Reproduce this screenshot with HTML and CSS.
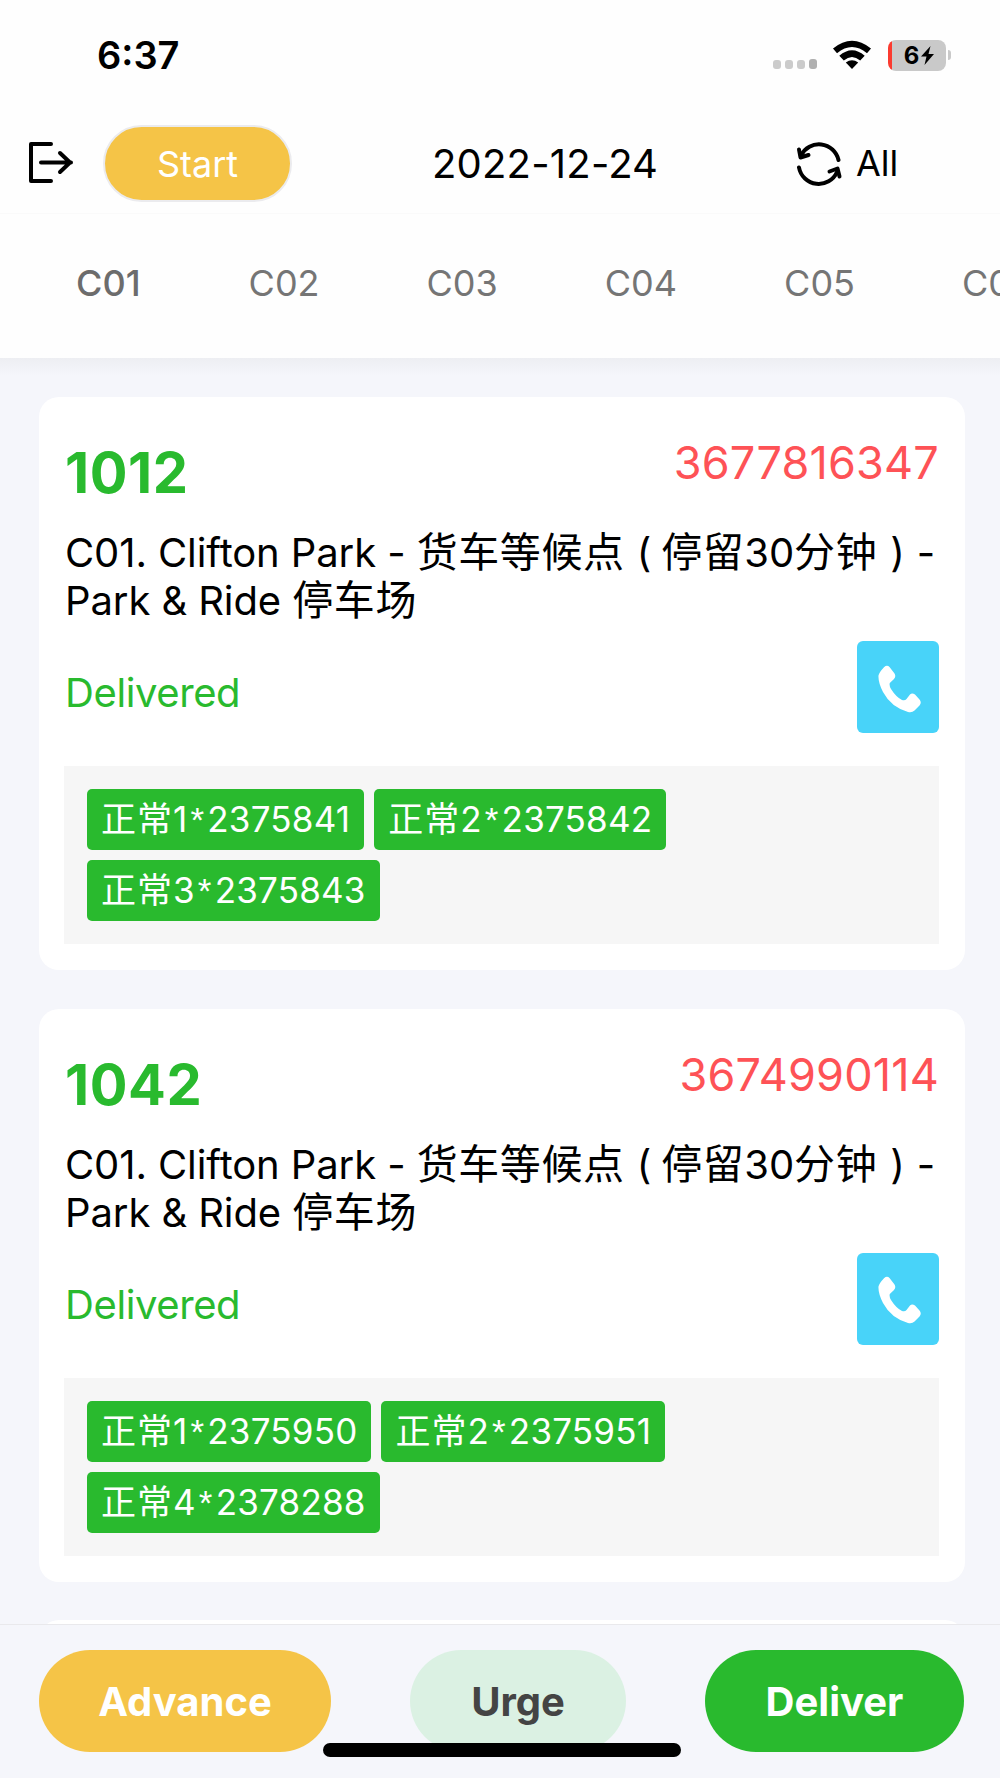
FILE: index.html
```
<!DOCTYPE html>
<html lang="zh-CN">
<head>
<meta charset="utf-8">
<title>Delivery</title>
<meta name="viewport" content="width=device-width, initial-scale=1">
<link rel="stylesheet" href="styles.css">
</head>
<body>
<div class="status">
	<div class="time">6:37</div>
	<div class="signal"><i></i><i></i><i></i><i></i></div>
	<svg class="wifi" width="40" height="30" viewBox="0 0 40 30">
		<path d="M1 8.6 Q20 -7 39 8.6 L35 13.2 Q20 0.6 5 13.2 Z"/>
		<path d="M7.3 15.8 Q20 4.8 32.7 15.8 L28.2 20.4 Q20 13.4 11.8 20.4 Z"/>
		<path d="M13.8 22.6 Q20 18 26.2 22.6 L20 29 Z"/>
	</svg>
	<div class="battery"><span>6</span><svg width="13" height="19" viewBox="0 0 13 19"><path d="M9.500 0 L0 10.500 H5.500 L3.500 19 L13 8 H7.500 Z"/></svg></div>
	<div class="cap"></div>
</div>
<div class="top">
	<svg class="exit" width="45" height="44" viewBox="0 0 45 44">
		<path d="M23 3H3V40H23M13 21.5H43M32 12L42 21.5L32 31"/>
	</svg>
	<button class="start">Start</button>
	<div class="date">2022-12-24</div>
	<svg class="sync" width="46" height="44" viewBox="0 0 46 44">
		<path d="M5 13.5A20 20 0 0 1 42.500 18M3 25.500A20 20 0 0 0 41 30"/>
		<path d="M3 7.500L4.500 15.500L12.500 13M33.500 29.500L41.500 26.500L43.500 34.500"/>
	</svg>
	<div class="all">All</div>
</div>
<div class="tabs">
	<div class="tab on">C01</div>
	<div class="tab">C02</div>
	<div class="tab">C03</div>
	<div class="tab">C04</div>
	<div class="tab">C05</div>
	<div class="tab">C06</div>
</div>
<div class="list">
	<div class="card">
		<div class="row">
			<div class="num">1012</div>
			<div class="phone">3677816347</div>
		</div>
		<div class="addr">C01. Clifton Park - <b>货车等候点</b><span class="open">(</span><b>停留</b>30<b>分钟</b><span class="close">)</span>-<br>Park &amp; Ride <b>停车场</b></div>
		<div class="row mid">
			<div class="state">Delivered</div>
			<button class="call"><svg width="44" height="50" viewBox="0 0 44 50"><path d="M1.500 11.500Q2 8.500 7 3.200Q10 0.500 12.500 3L17.500 9.500Q19.300 12.500 17 15L12.800 19Q12 21.500 14 25Q19 33 25 36Q28 37 29.500 35L33 30.500Q35 28.500 38 30.500L42.500 35.500Q45 38.500 42.500 41.500L37.500 46.500Q35 49 31 48Q14 43 6 28Q1 18 1.500 11.500Z"/></svg></button>
		</div>
		<div class="tags">
			<span class="tag"><b>正常</b>1<i>*</i>2375841</span>
			<span class="tag"><b>正常</b>2<i>*</i>2375842</span>
			<span class="tag"><b>正常</b>3<i>*</i>2375843</span>
		</div>
	</div>
	<div class="card">
		<div class="row">
			<div class="num">1042</div>
			<div class="phone">3674990114</div>
		</div>
		<div class="addr">C01. Clifton Park - <b>货车等候点</b><span class="open">(</span><b>停留</b>30<b>分钟</b><span class="close">)</span>-<br>Park &amp; Ride <b>停车场</b></div>
		<div class="row mid">
			<div class="state">Delivered</div>
			<button class="call"><svg width="44" height="50" viewBox="0 0 44 50"><path d="M1.500 11.500Q2 8.500 7 3.200Q10 0.500 12.500 3L17.500 9.500Q19.300 12.500 17 15L12.800 19Q12 21.500 14 25Q19 33 25 36Q28 37 29.500 35L33 30.500Q35 28.500 38 30.500L42.500 35.500Q45 38.500 42.500 41.500L37.500 46.500Q35 49 31 48Q14 43 6 28Q1 18 1.500 11.500Z"/></svg></button>
		</div>
		<div class="tags">
			<span class="tag"><b>正常</b>1<i>*</i>2375950</span>
			<span class="tag"><b>正常</b>2<i>*</i>2375951</span>
			<span class="tag"><b>正常</b>4<i>*</i>2378288</span>
		</div>
	</div>
	<div class="card"></div>
</div>
<div class="bottom">
	<button class="btn advance">Advance</button>
	<button class="btn urge">Urge</button>
	<button class="btn deliver">Deliver</button>
	<div class="home"></div>
</div>
</body>
</html>
```
FILE: styles.css
```
* {
box-sizing: border-box;
}
body {
margin: 0;
height: 1778px;
overflow: hidden;
display: flex;
flex-direction: column;
background-color: #f5f6fb;
color: black;
font-family: Inter, "Noto Sans CJK SC", sans-serif;
}
button {
border: none;
padding: 0;
color: white;
font-family: inherit;
}
b {
font-weight: normal;
font-family: "Noto Sans CJK SC", sans-serif;
}
.status {
height: 110px;
flex: none;
display: flex;
align-items: center;
padding-left: 97px;
background-color: #fefefe;
}
.time {
width: 676px;
font-size: 38px;
font-weight: 600;
line-height: 46px;
}
.signal {
width: 59px;
display: flex;
align-items: flex-end;
gap: 4px;
padding-top: 18px;
}
.signal i {
width: 8px;
height: 9px;
border-radius: 3px;
background-color: #cbcbcb;
}
.signal i:last-child {
height: 10px;
background-color: #b0b0b0;
}
.wifi {
margin-right: 16px;
}
.battery {
width: 58px;
height: 31px;
border-radius: 8px;
display: flex;
align-items: center;
justify-content: center;
gap: 2px;
padding-left: 4px;
background: linear-gradient(to right, #fb3b30 4px, #c9c9c9 4px);
font-size: 24px;
font-weight: 700;
}
.battery svg {
flex: none;
}
.cap {
width: 3px;
height: 10px;
margin-left: 2px;
border-radius: 0 4px 4px 0;
background-color: #c9c9c9;
}
.top {
height: 104px;
flex: none;
display: flex;
align-items: center;
padding: 4px 0 0 28px;
border-bottom: 1px solid #fafafa;
background-color: #fefefe;
}
.exit, .sync {
fill: none;
stroke: black;
stroke-width: 4;
stroke-linecap: round;
stroke-linejoin: round;
}
.exit {
margin-top: -2px;
}
.start {
width: 189px;
height: 77px;
margin-left: 30px;
border: 2px solid #ebebee;
border-radius: 39px;
background-color: #f5c447;
font-size: 36px;
}
.date {
width: 364px;
margin-left: 140px;
font-size: 40px;
letter-spacing: 0.2px;
}
.all {
margin: -2px 0 0 14px;
font-size: 36px;
}
.tabs {
height: 144px;
flex: none;
display: flex;
align-items: center;
gap: 107px;
padding: 0 0 6px 76px;
overflow: hidden;
background-color: #fefefe;
color: #757575;
font-size: 36px;
white-space: nowrap;
}
.on {
margin-right: 1px;
font-weight: 500;
color: #6c6c6c;
}
.list {
height: 1266px;
flex: none;
overflow: hidden;
padding: 39px 35px 0 39px;
background: linear-gradient(#edeef2, #f5f6fb 18px);
}
.card {
height: 573px;
margin-bottom: 38.5px;
border-radius: 20px;
padding: 35px 26px 26px 25px;
background-color: white;
}
.row {
display: flex;
justify-content: space-between;
}
.num {
margin-left: 1px;
color: #29ba2e;
font-size: 56px;
font-weight: 700;
line-height: 82px;
letter-spacing: 0.6px;
}
.phone {
color: #fe5256;
font-size: 45px;
line-height: 62px;
letter-spacing: 0.2px;
}
.addr {
margin: 15px 0 0 1px;
font-size: 40px;
line-height: 48px;
letter-spacing: -0.1px;
white-space: nowrap;
}
.addr b {
font-size: 41px;
line-height: 1;
letter-spacing: 0.6px;
}
.open {
padding: 0 10px 0 12px;
}
.close {
padding: 0 12px 0 13px;
}
.mid {
align-items: center;
padding-top: 16px;
}
.state {
padding-top: 11px;
margin-left: 1px;
color: #29ba2e;
font-size: 40px;
letter-spacing: -0.4px;
}
.call {
width: 82px;
height: 92px;
border-radius: 6px;
background-color: #48d3f9;
}
.call svg {
fill: white;
display: block;
margin: 3px 0 0 20px;
}
.tags {
height: 178px;
margin-top: 33px;
padding: 23px;
display: flex;
flex-wrap: wrap;
align-content: flex-start;
gap: 10px;
background-color: #f6f6f6;
}
.tag {
height: 61px;
padding: 0 14px;
border-radius: 5px;
background-color: #29ba2e;
color: white;
font-size: 35px;
line-height: 61px;
letter-spacing: 0.2px;
}
.tag b {
line-height: 1;
letter-spacing: 1px;
}
.tag i {
margin: 0 3px;
font-family: "Liberation Sans", sans-serif;
font-style: normal;
line-height: 1;
}
.bottom {
height: 154px;
flex: none;
position: relative;
display: flex;
justify-content: space-between;
padding: 25px 36px 0 39px;
border-top: 1px solid #e9e9ec;
}
.btn {
height: 102px;
border-radius: 51px;
font-size: 40px;
font-weight: 700;
}
.advance {
width: 292px;
background-color: #f5c447;
}
.urge {
width: 216px;
background-color: #dbf1e3;
color: #444;
}
.deliver {
width: 259px;
background-color: #29ba2e;
}
.home {
position: absolute;
left: 323px;
top: 118px;
width: 358px;
height: 14px;
border-radius: 7px;
background-color: black;
}
```
